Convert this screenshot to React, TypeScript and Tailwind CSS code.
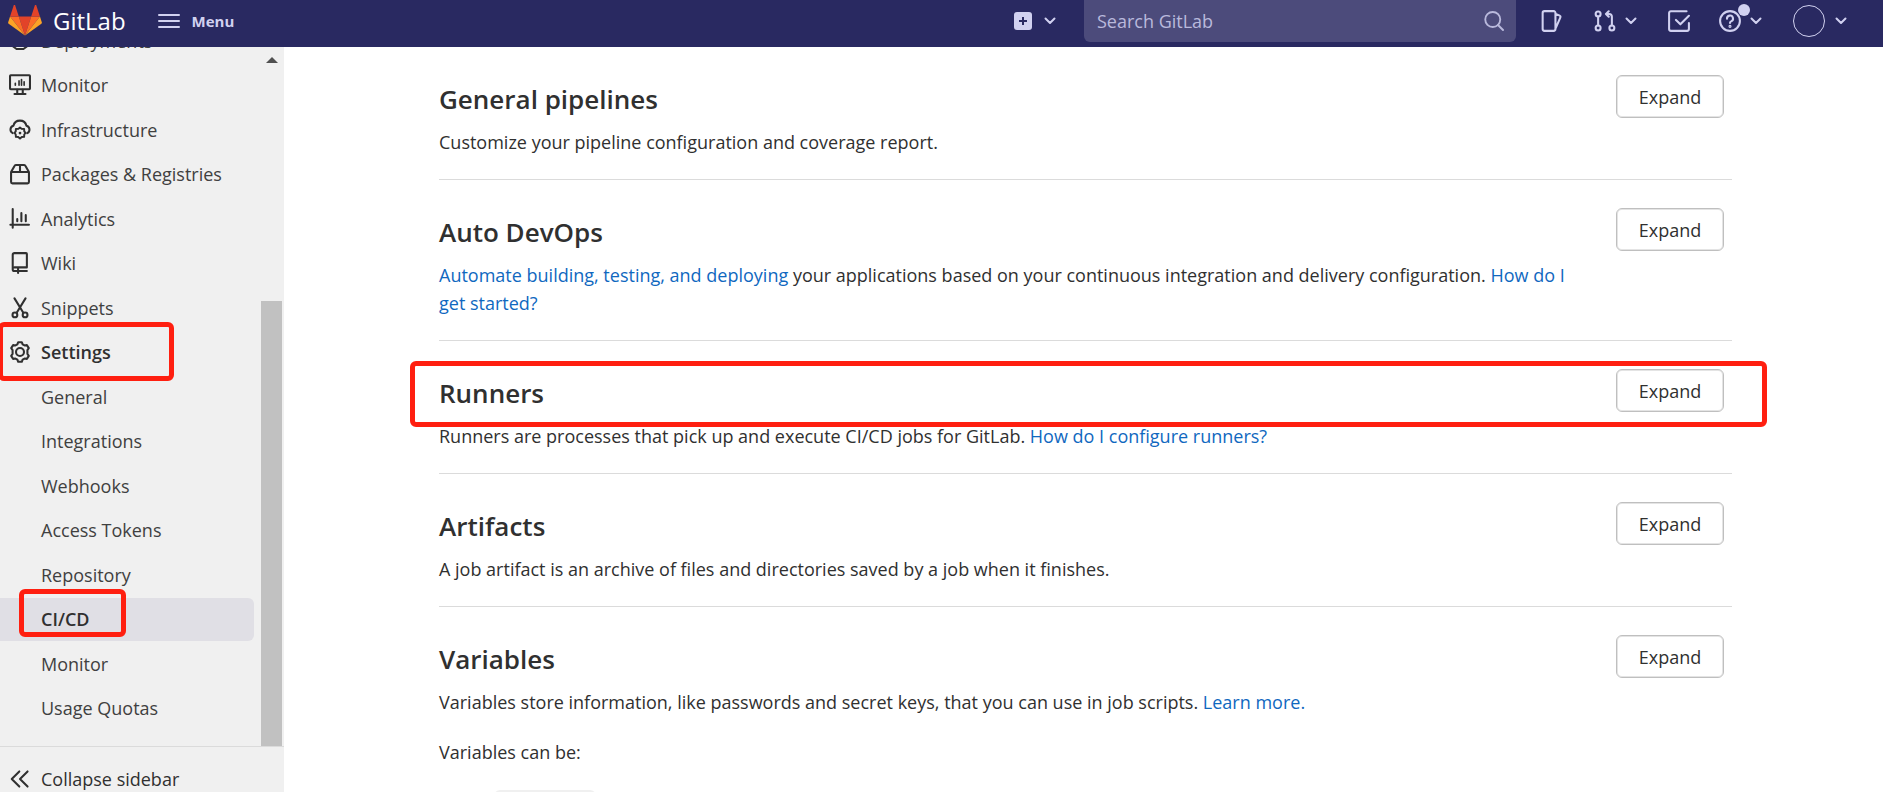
import type { ReactNode } from "react";

function Icon({ children, className = "size-[22px]" }: { children: ReactNode; className?: string }) {
  return (
    <svg
      viewBox="0 0 16 16"
      className={`shrink-0 ${className}`}
      fill="none"
      stroke="currentColor"
      strokeWidth="1.5"
      strokeLinecap="round"
      strokeLinejoin="round"
      aria-hidden="true"
    >
      {children}
    </svg>
  );
}

const Chevron = () => (
  <svg viewBox="0 0 12 8" className="h-2 w-3 shrink-0" fill="none" stroke="currentColor" strokeWidth="2" strokeLinecap="round" strokeLinejoin="round" aria-hidden="true">
    <path d="M1.500 1.500 6 6l4.500-4.500" />
  </svg>
);

const icons = {
  deployments: (
    <Icon>
      <path d="M8 1 3 4v8l2.500 1.800h5L13 12V4z" />
    </Icon>
  ),
  monitor: (
    <Icon>
      <rect x=".75" y=".9" width="14.500" height="10.200" rx=".5" />
      <path d="M4.600 6.800v1.300M7.300 5v3.100M9.100 4v4.100M11 5.600v2.500" strokeWidth="1.200" />
      <path d="M6 11.400v2.600M10 11.400v2.600M4 14.600h8" />
    </Icon>
  ),
  infrastructure: (
    <Icon>
      <path d="M2.700 10.300A2.900 2.900 0 0 1 3.200 4.900 4.900 4.900 0 0 1 12.700 4.900a2.900 2.900 0 0 1 .6 5.400" />
      <path d="m8 6.200 1.300 1 1.700.1.100 1.700.9 1.100-.9 1.200-.1 1.700-1.700.1L8 14.300l-1.300-1.200-1.700-.1-.1-1.700-.9-1.200.9-1.100.1-1.700 1.700-.1z" strokeWidth="1.400" />
      <circle cx="8" cy="10.200" r=".6" fill="currentColor" strokeWidth=".8" />
    </Icon>
  ),
  packages: (
    <Icon>
      <path d="M1.500 6.600h13v7.200a1 1 0 0 1-1 1h-11a1 1 0 0 1-1-1zM1.500 6.600 4 2.100a1.200 1.200 0 0 1 1-.7h6a1.200 1.200 0 0 1 1 .7l2.500 4.500M8 1.400v5" />
    </Icon>
  ),
  analytics: (
    <Icon>
      <path d="M2.700.8v13.600M1 12.200h13.500M6 8v1.600M9 3.700v5.900M12.200 5.200v4.400" />
    </Icon>
  ),
  wiki: (
    <Icon>
      <path d="M13 10.800V1.400a.6.6 0 0 0-.6-.6H3.900A1.200 1.200 0 0 0 2.700 2v10.700c0 .7.500 1.100 1.200 1.100H13M13 11.200H4M6.600 11.600v3.600" />
    </Icon>
  ),
  snippets: (
    <Icon>
      <path d="M4 1 10.300 11.300M12 1 5.700 11.300" />
      <circle cx="4.300" cy="13" r="1.750" />
      <circle cx="11.700" cy="13" r="1.750" />
    </Icon>
  ),
  settings: (
    <Icon>
      <path d="M6.700.9h2.600l.6 1.500 1.400.8 1.700-.2 1.400 2.200-1 1.400v2.800l1 1.400L13 13l-1.700-.2-1.400.8-.6 1.500H6.700l-.6-1.500-1.400-.8L3 13l-1.400-2.200 1-1.400V6.600l-1-1.400L3 3l1.700.2 1.400-.8z" />
      <circle cx="8" cy="8" r="2.900" />
    </Icon>
  ),
};

type NavEntry = { label: string; icon?: ReactNode; bold?: boolean; active?: boolean; mark?: string };

const navEntries: NavEntry[] = [
  { label: "Deployments", icon: icons.deployments },
  { label: "Monitor", icon: icons.monitor },
  { label: "Infrastructure", icon: icons.infrastructure },
  { label: "Packages & Registries", icon: icons.packages },
  { label: "Analytics", icon: icons.analytics },
  { label: "Wiki", icon: icons.wiki },
  { label: "Snippets", icon: icons.snippets },
  { label: "Settings", icon: icons.settings, bold: true, mark: "-top-[9px] -left-0.5 h-[59px] w-44" },
  { label: "General" },
  { label: "Integrations" },
  { label: "Webhooks" },
  { label: "Access Tokens" },
  { label: "Repository" },
  { label: "CI/CD", bold: true, active: true, mark: "-top-[9px] left-[19px] h-12 w-[107px]" },
  { label: "Monitor" },
  { label: "Usage Quotas" },
];

function Mark({ className }: { className: string }) {
  return <span className={`pointer-events-none absolute rounded-md border-[5px] border-[#ff1f10] ${className}`} />;
}

function NavItem({ label, icon, bold, active, mark }: NavEntry) {
  return (
    <li className="relative">
      <a
        href="#"
        aria-current={active ? "page" : undefined}
        className={`flex h-[43px] items-center gap-2.5 rounded-r-md pl-[9px] ${active ? "bg-[#e0dfe5]" : ""} ${bold ? "font-semibold text-[#303030]" : "text-[#404040]"}`}
      >
        {icon ? <span className="text-[#303030]">{icon}</span> : <span className="w-[22px]" />}
        {label}
      </a>
      {mark && <Mark className={mark} />}
    </li>
  );
}

function Section({ title, children, mark, last }: { title: string; children: ReactNode; mark?: boolean; last?: boolean }) {
  return (
    <section className={`relative pt-7 pb-[23px] ${last ? "" : "border-b border-[#dbdbdb]"}`}>
      <div className="flex items-start justify-between pr-2">
        <h2 className="pt-1.5 text-[26px] leading-9 font-semibold text-[#303030]">{title}</h2>
        <button type="button" className="h-[43px] w-[108px] rounded-md border border-[#bfbfbf] bg-white text-[#303030] inset-shadow-[0_0_0_1px_#e4e4e4]">
          Expand
        </button>
      </div>
      <div className="mt-2.5 pr-[140px]">{children}</div>
      {mark && <Mark className="top-5 -right-[35px] -left-[29px] h-[66px]" />}
    </section>
  );
}

function Link({ children }: { children: ReactNode }) {
  return (
    <a href="#" className="text-[#1068bf]">
      {children}
    </a>
  );
}

function Header() {
  return (
    <header className="z-10 flex h-[47px] shrink-0 items-center bg-[#292961] pr-9 pb-1.5 pl-2 text-[#d1d1f0]">
      <a href="#" className="flex items-center gap-[11px] text-white">
        <svg viewBox="0 0 36 33" className="h-[31px] w-[34px]" aria-hidden="true">
          <path fill="#e24329" d="m18 32.500 6.600-20.300H11.400z" />
          <path fill="#fc6d26" d="m18 32.500-6.600-20.300H2.100z" />
          <path fill="#fca326" d="M2.100 12.200.1 18.400a1.400 1.400 0 0 0 .5 1.500L18 32.500z" />
          <path fill="#e24329" d="M2.100 12.200h9.300l-4-12.200a.7.7 0 0 0-1.300 0z" />
          <path fill="#fc6d26" d="m18 32.500 6.600-20.300h9.300z" />
          <path fill="#fca326" d="m33.900 12.200 2 6.200a1.400 1.400 0 0 1-.5 1.500L18 32.500z" />
          <path fill="#e24329" d="M33.900 12.200h-9.300l4-12.200a.7.7 0 0 1 1.300 0z" />
        </svg>
        <span className="text-2xl leading-7 font-medium">GitLab</span>
      </a>
      <button type="button" className="ml-8 flex items-center gap-3 text-[15px] font-bold">
        <svg viewBox="0 0 22 16" className="h-4 w-[22px]" stroke="currentColor" strokeWidth="2" strokeLinecap="round" aria-hidden="true">
          <path d="M1 2h20M1 8h20M1 14h20" />
        </svg>
        Menu
      </button>
      <div className="ml-auto flex items-center">
        <button type="button" aria-label="Create new" className="mr-7 flex items-center gap-3">
          <svg viewBox="0 0 18 18" className="size-[18px]" aria-hidden="true">
            <rect width="18" height="18" rx="3" fill="currentColor" />
            <path d="M9 5v8M5 9h8" stroke="#292961" strokeWidth="2" />
          </svg>
          <Chevron />
        </button>
        <label className="-mt-1 mr-[25px] flex h-[47px] w-[432px] items-center rounded-md bg-[#4c4b7b] pr-3 pl-[13px] text-[#b9b9dc]">
          <input type="text" aria-label="Search GitLab" placeholder="Search GitLab" className="mt-1 min-w-0 flex-1 bg-transparent outline-none placeholder:text-[#b9b9dc]" />
          <Icon className="mt-1 size-5">
            <circle cx="7" cy="6.800" r="6" />
            <path d="m11.200 11.200 4 4" />
          </Icon>
        </label>
        <a href="#" aria-label="Issues" className="mr-[31px]">
          <Icon>
            <path d="M2.500.8h6.700a1.300 1.300 0 0 1 1.300 1.300v11.800a1.300 1.300 0 0 1-1.300 1.300H2.500a1.300 1.300 0 0 1-1.300-1.300V2.100A1.300 1.300 0 0 1 2.500.8zM10.700 2.800l2.900 1.300a1 1 0 0 1 .5 1.300l-3.400 7.800" />
          </Icon>
        </a>
        <button type="button" aria-label="Merge requests" className="mr-[31px] flex items-center gap-[9px]">
          <Icon>
            <circle cx="3" cy="2.900" r="1.800" />
            <circle cx="3" cy="13.100" r="1.800" />
            <circle cx="13" cy="13.100" r="1.800" />
            <path d="M3 4.700v6.600M13 11.300V4.900A2 2 0 0 0 11 2.900H9M10.700.9l-2 2 2 2" />
          </Icon>
          <Chevron />
        </button>
        <a href="#" aria-label="To-Do List" className="mr-[29px]">
          <Icon>
            <path d="M13.500.9H2.100A1.300 1.300 0 0 0 .8 2.200v11.700a1.300 1.300 0 0 0 1.300 1.300h11.800a1.300 1.300 0 0 0 1.300-1.300V9.500M5.800 7.200 9 10.400l6.200-6.200" />
          </Icon>
        </a>
        <button type="button" aria-label="Help" className="relative mr-[31px] flex items-center gap-[9px]">
          <Icon>
            <circle cx="8" cy="8" r="7.200" />
            <path d="M5.800 6.400A2.200 2.200 0 1 1 8.800 8.300c-.5.200-.8.500-.8 1.100" />
            <circle cx="8" cy="11.900" r=".4" />
          </Icon>
          <Chevron />
          <span className="absolute -top-1.5 left-[19px] size-3 rounded-full bg-[#d1d1f0]" />
        </button>
        <button type="button" aria-label="Account" className="flex items-center gap-2.5">
          <span className="size-8 rounded-full border border-[#d1d1f0]" />
          <Chevron />
        </button>
      </div>
    </header>
  );
}

function Sidebar() {
  return (
    <aside className="flex w-[284px] shrink-0 flex-col bg-[#f0f0f0]">
      <div className="flex min-h-0 flex-1">
        <nav aria-label="Project" className="-mt-7 flex flex-1 flex-col pr-[7px] pb-4">
          <ul className="flex flex-1 flex-col justify-between">
            {navEntries.map((entry, index) => (
              <NavItem key={index} {...entry} />
            ))}
          </ul>
        </nav>
        <div className="mr-0.5 flex w-[21px] flex-col items-center" aria-hidden="true">
          <svg viewBox="0 0 12 6" className="mt-2.5 h-1.5 w-3" fill="#505050">
            <path d="M6 0l6 6H0z" />
          </svg>
          <div className="mt-[238px] w-full flex-1 bg-[#c1c1c1]" />
        </div>
      </div>
      <button type="button" className="flex h-[46px] shrink-0 items-center gap-2.5 border-t border-[#dbdbdb] pt-[18px] pl-[9px] text-[#303030]">
        <Icon>
          <path d="M7.500 2.500 2 8l5.500 5.500M13.500 2.500 8 8l5.500 5.500" />
        </Icon>
        Collapse sidebar
      </button>
    </aside>
  );
}

export default function App() {
  return (
    <div className="flex h-screen flex-col overflow-hidden bg-white font-['Open_Sans','Noto_Sans',sans-serif] text-[18px] leading-7 text-[#303030]">
      <Header />
      <div className="flex min-h-0 flex-1">
        <Sidebar />
        <main className="min-w-0 flex-1 pr-[151px] pl-[155px]">
          <Section title="General pipelines">
            <p>Customize your pipeline configuration and coverage report.</p>
          </Section>
          <Section title="Auto DevOps">
            <p>
              <Link>Automate building, testing, and deploying</Link> your applications based on your continuous integration and delivery configuration.{" "}
              <Link>How do I get started?</Link>
            </p>
          </Section>
          <Section title="Runners" mark>
            <p>
              Runners are processes that pick up and execute CI/CD jobs for GitLab. <Link>How do I configure runners?</Link>
            </p>
          </Section>
          <Section title="Artifacts">
            <p>A job artifact is an archive of files and directories saved by a job when it finishes.</p>
          </Section>
          <Section title="Variables" last>
            <p>
              Variables store information, like passwords and secret keys, that you can use in job scripts. <Link>Learn more.</Link>
            </p>
            <p className="mt-[22px]">Variables can be:</p>
            <ul className="mt-6 pl-[55px]">
              <li>
                <code className="block h-6 w-[102px] rounded-md bg-[#f0f0f0]" />
              </li>
            </ul>
          </Section>
        </main>
      </div>
    </div>
  );
}
